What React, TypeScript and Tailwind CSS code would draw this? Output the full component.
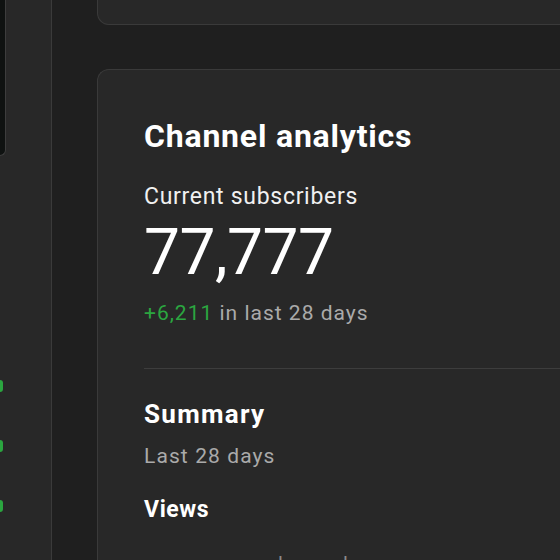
export default function App() {
  return (
    <div
      className="flex h-[560px] w-[560px] overflow-hidden bg-[#1f1f1f] text-white"
      style={{ fontFamily: 'Roboto, "Noto Sans", sans-serif' }}
    >
      {/* Left sidebar, clipped */}
      <div className="flex h-full w-[52px] shrink-0 flex-col border-r border-[#3a3a3a] bg-[#282828]">
        <div className="h-[156px] w-[6px] rounded-br-lg border-r border-b border-[#3d3d3d] bg-[#0f1211]" />
        <div className="mt-[224px] flex flex-col gap-[48px]">
          <div className="h-[12px] w-[3px] rounded-r-full bg-[#2ba640]" />
          <div className="h-[12px] w-[3px] rounded-r-full bg-[#2ba640]" />
          <div className="h-[12px] w-[3px] rounded-r-full bg-[#2ba640]" />
        </div>
      </div>

      {/* Main column */}
      <div className="flex min-w-0 flex-1 flex-col pl-[45px]">
        <div className="h-[25px] w-[520px] shrink-0 rounded-bl-xl border-r border-b border-l border-[#3a3a3a] bg-[#282828]" />

        <div className="mt-[44px] w-[520px] flex-1 shrink-0 rounded-tl-xl border-t border-l border-[#3a3a3a] bg-[#282828] pt-[46px] pl-[46px]">
          <h2 className="text-[32px] font-bold leading-[40px] tracking-[0.8px]">Channel analytics</h2>

          <div className="mt-[27px] text-[23px] leading-[28px] tracking-[0.7px] text-[#f1f1f1]">Current subscribers</div>
          <div className="mt-[6px] text-[64px] leading-[72px] font-normal tracking-[-0.5px]">77,777</div>
          <div className="mt-[11px] text-[21px] leading-[26px] tracking-[1px] text-[#aaaaaa]">
            <span className="text-[#2ba640]">+6,211</span> in last 28 days
          </div>

          <div className="mt-[42px] h-px w-full bg-[#3d3d3d]" />

          <div className="mt-[29px] text-[26px] font-bold leading-[32px] tracking-[1.3px]">Summary</div>
          <div className="mt-[13px] text-[21px] leading-[26px] tracking-[1.1px] text-[#aaaaaa]">Last 28 days</div>
          <div className="mt-[27px] text-[23px] font-bold leading-[28px] tracking-[0.6px]">Views</div>
          <div className="mt-[27px] flex gap-[60px] pl-[134px] text-[20px] leading-[26px] text-[#8a8a8a]">
            <span>l</span>
            <span>l</span>
          </div>
        </div>
      </div>
    </div>
  );
}
